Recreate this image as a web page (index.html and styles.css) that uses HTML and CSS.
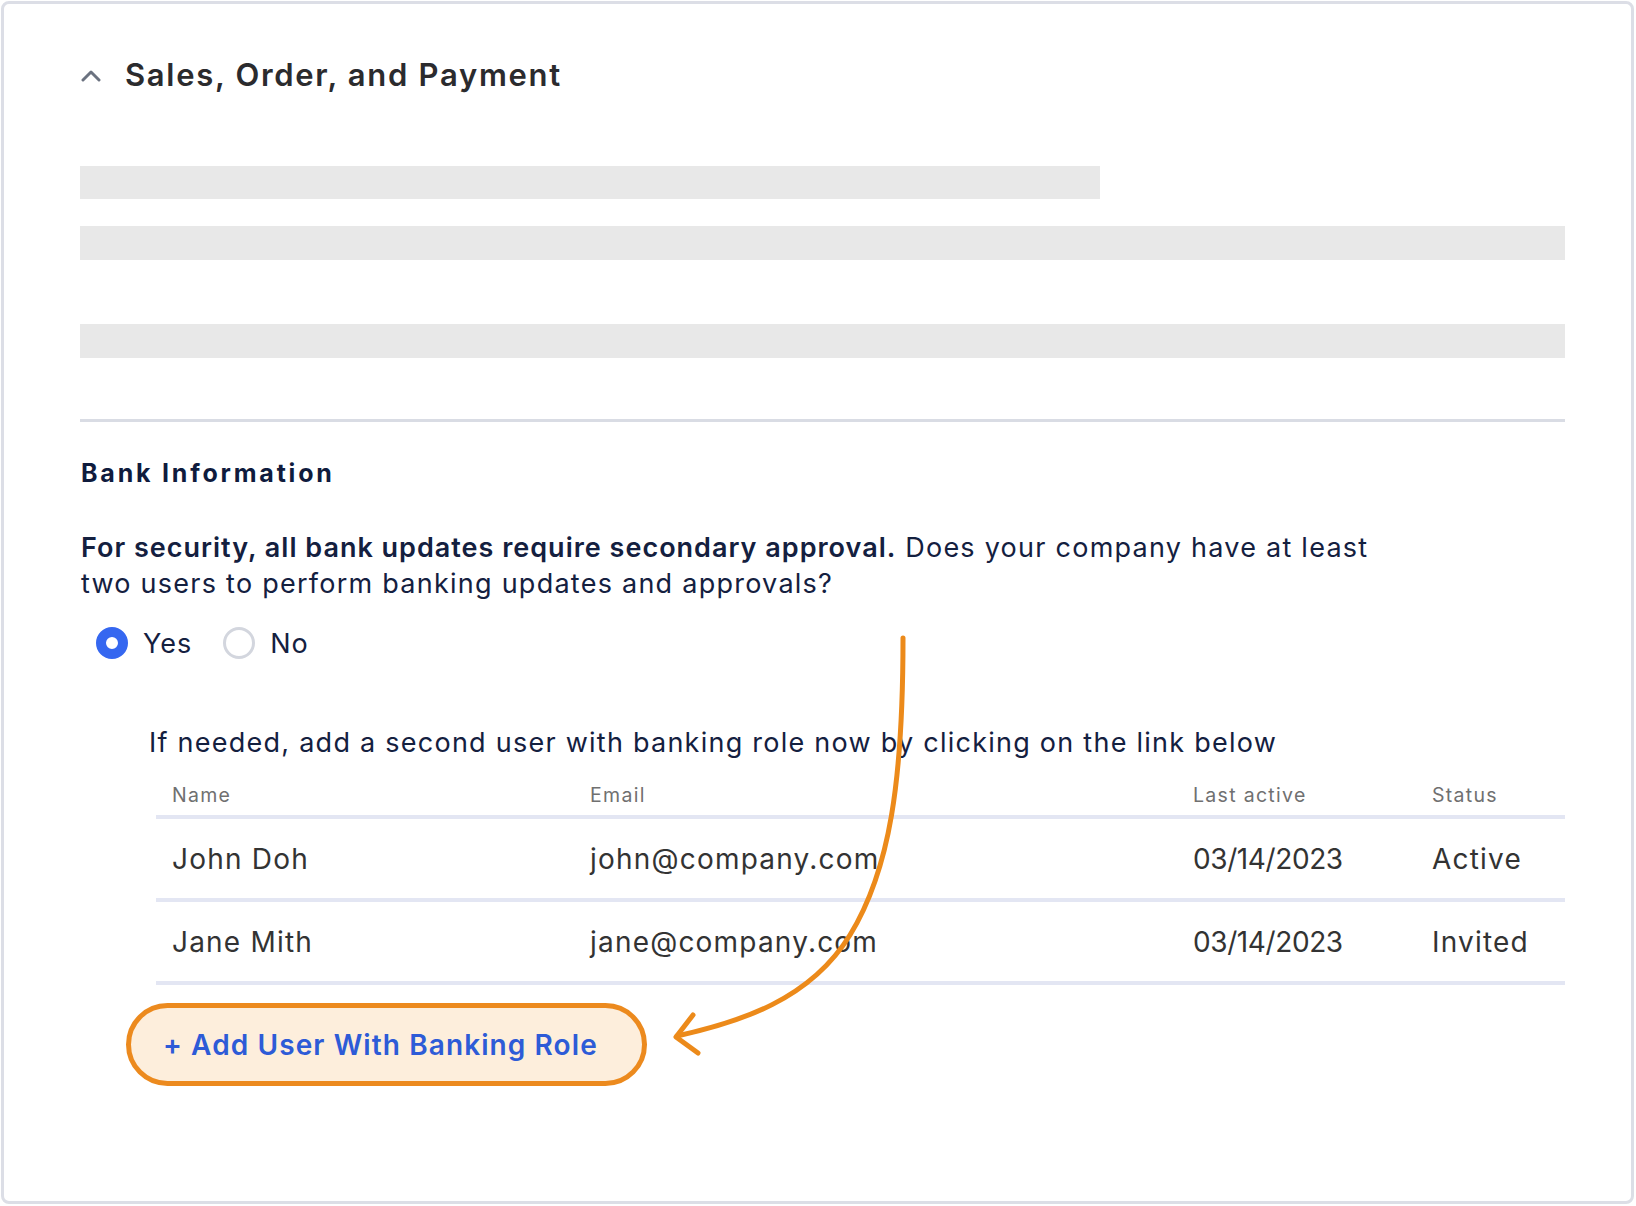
FILE: index.html
```html
<!doctype html>
<html lang="en">
  <head>
    <meta charset="UTF-8" />
    <meta name="viewport" content="width=device-width, initial-scale=1.0" />
    <title>Bank Information</title>
    <link rel="stylesheet" href="styles.css">
  </head>
  <body>
    <div class="card">
      <div class="section-head">
        <svg class="chevron" width="20" height="14" viewBox="0 0 20 14">
          <path d="M2 12 L10 4 L18 12" fill="none" stroke="#6b7280" stroke-width="3" stroke-linecap="round" stroke-linejoin="round" />
        </svg>
        <h1 class="section-title">Sales, Order, and Payment</h1>
      </div>

      <div class="skeleton skeleton-short"></div>
      <div class="skeleton skeleton-second"></div>
      <div class="skeleton skeleton-third"></div>

      <div class="divider"></div>

      <h2 class="bank-title">Bank Information</h2>
      <p class="question">
        <strong>For security, all bank updates require secondary approval.</strong> Does your company have at least<br>
        two users to perform banking updates and approvals?
      </p>

      <div class="radios">
        <label class="radio">
          <span class="radio-dot checked"></span>
          <span>Yes</span>
        </label>
        <label class="radio">
          <span class="radio-dot"></span>
          <span>No</span>
        </label>
      </div>

      <p class="hint">If needed, add a second user with banking role now by clicking on the link below</p>

      <div class="users">
        <div class="users-row users-head">
          <div>Name</div>
          <div>Email</div>
          <div>Last active</div>
          <div>Status</div>
        </div>
        <div class="users-row">
          <div>John Doh</div>
          <div>john@company.com</div>
          <div class="date">03/14/2023</div>
          <div>Active</div>
        </div>
        <div class="users-row">
          <div>Jane Mith</div>
          <div>jane@company.com</div>
          <div class="date">03/14/2023</div>
          <div>Invited</div>
        </div>
      </div>

      <button class="add-user">+ Add User With Banking Role</button>
    </div>

    <svg class="pointer" width="1636" height="1206" viewBox="0 0 1636 1206">
      <path d="M903 638 C903 780 890 870 850 935 C810 1000 740 1022 677 1036" fill="none" stroke="#ec8a1a" stroke-width="5" stroke-linecap="round" />
      <path d="M693 1015 L676 1037 L698 1053" fill="none" stroke="#ec8a1a" stroke-width="5" stroke-linecap="round" stroke-linejoin="round" />
    </svg>
  </body>
</html>
```

FILE: styles.css
```css
body {
  margin: 0;
  background-color: #fff;
  font-family: Inter, "Noto Sans", sans-serif;
  color: #14203f;
}

.card {
  box-sizing: border-box;
  height: calc(100vh - 3px);
  margin: 1px 2px 2px 1px;
  padding: 51px 66px 0 76px;
  border: 3px solid #dcdee6;
  border-radius: 8px;
}

.section-head {
  display: flex;
  align-items: center;
  gap: 24px;
  height: 40px;
  padding-left: 1px;
}

.chevron {
  display: block;
}

.section-title {
  margin: 0;
  font-size: 31px;
  font-weight: 600;
  line-height: 40px;
  letter-spacing: 1.7px;
  color: #2b2b2e;
}

.skeleton {
  height: 33px;
  background-color: #e8e8e8;
}

.skeleton-short {
  width: 1020px;
  margin-top: 71px;
}

.skeleton-second {
  margin-top: 27px;
  height: 34px;
}

.skeleton-third {
  margin-top: 64px;
  height: 34px;
}

.divider {
  height: 3px;
  margin-top: 61px;
  background-color: #d9dce4;
}

.bank-title {
  margin: 36px 0 0 1px;
  font-size: 25px;
  font-weight: 700;
  line-height: 30px;
  letter-spacing: 2.8px;
  color: #0f1b3d;
}

.question {
  margin: 42px 0 0 1px;
  font-size: 27px;
  line-height: 36px;
  letter-spacing: 1.25px;
}

.question strong {
  font-weight: 600;
  letter-spacing: 1px;
}

.radios {
  display: flex;
  gap: 31px;
  height: 40px;
  margin: 21px 0 0 16px;
}

.radio {
  display: flex;
  align-items: center;
  gap: 15px;
  font-size: 27px;
  letter-spacing: 1px;
}

.radio-dot {
  box-sizing: border-box;
  width: 32px;
  height: 32px;
  border: 3px solid #d3d6de;
  border-radius: 50%;
}

.radio-dot.checked {
  border: 10.5px solid #3567f0;
}

.hint {
  margin: 62px 0 0 69px;
  font-size: 27px;
  line-height: 36px;
  letter-spacing: 1.25px;
}

.users {
  margin: 9px 0 0 76px;
  color: #333;
}

.users-row {
  display: grid;
  grid-template-columns: 418px 603px 239px 1fr;
  align-items: center;
  height: 79px;
  padding-left: 16px;
  border-bottom: 4px solid #e3e6f3;
  font-size: 28px;
  letter-spacing: 1.2px;
}

.users-row .date {
  letter-spacing: -0.4px;
}

.users-head {
  height: 41px;
  padding-top: 4px;
  font-size: 19.5px;
  letter-spacing: 1.3px;
  color: #707070;
}

.add-user {
  box-sizing: border-box;
  width: 521px;
  height: 83px;
  margin: 18px 0 0 46px;
  padding: 0 0 0 32px;
  text-align: left;
  background-color: #fdeedc;
  border: 5px solid #ec8a1e;
  border-radius: 42px;
  font-family: inherit;
  font-size: 28px;
  font-weight: 600;
  letter-spacing: 1.1px;
  color: #2d5bd7;
  cursor: pointer;
}

.pointer {
  position: absolute;
  top: 0;
  left: 0;
  pointer-events: none;
}
```
